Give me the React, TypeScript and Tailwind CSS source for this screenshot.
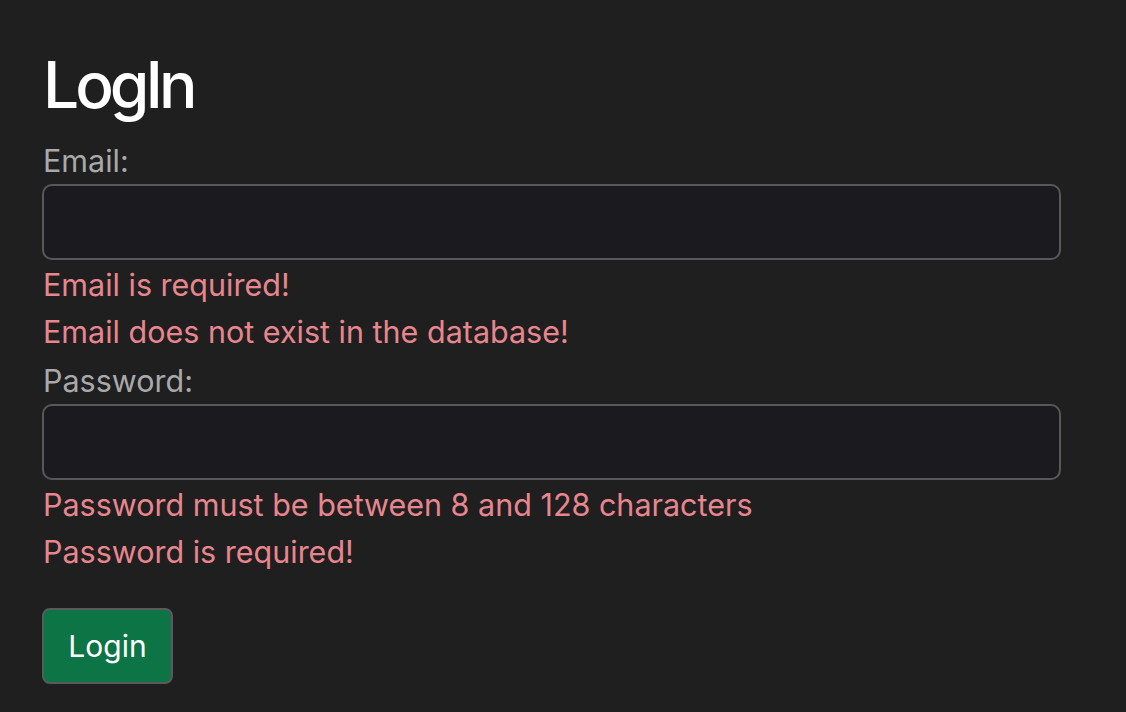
import React from 'react';

const font = { fontFamily: 'Inter, "Noto Sans", sans-serif' };

export default function App() {
    return (
        <div className="min-h-[712px] w-full bg-[#1f1f1f] pl-[42px] pt-[46px]" style={font}>
            <form className="w-[1019px]" onSubmit={(e) => e.preventDefault()}>
                <h1 className="text-[64px] leading-[77px] font-medium tracking-[-4px] text-white mb-[17px] pl-[1px]">LogIn</h1>

                <label className="block text-[30.5px] leading-[42px] text-[#a9a9ab] pl-[1px] mb-[2px]">Email:</label>
                <input type="email" className="block w-full h-[76px] rounded-[10px] border-2 border-[#58585a] bg-[#1b1b1f] outline-none" />
                <div className="mt-[1px] text-[30.5px] leading-[47px] text-[#e8868f] pl-[1px]">Email is required!</div>
                <div className="text-[30.5px] leading-[47px] text-[#e8868f] pl-[1px]">Email does not exist in the database!</div>

                <label className="block mt-[5px] mb-[2px] text-[30.5px] leading-[42px] text-[#a9a9ab] pl-[1px]">Password:</label>
                <input type="password" className="block w-full h-[76px] rounded-[10px] border-2 border-[#58585a] bg-[#1b1b1f] outline-none" />
                <div className="mt-[1px] text-[30.5px] leading-[47px] text-[#e8868f] pl-[1px]">Password must be between 8 and 128 characters</div>
                <div className="text-[30.5px] leading-[47px] text-[#e8868f] pl-[1px]">Password is required!</div>

                <button type="submit" className="mt-[33px] w-[131px] h-[76px] rounded-[8px] border-2 border-[#5a5a5a] bg-[#0c7445] text-white text-[30px] leading-none">
                    Login
                </button>
            </form>
        </div>
    );
}
